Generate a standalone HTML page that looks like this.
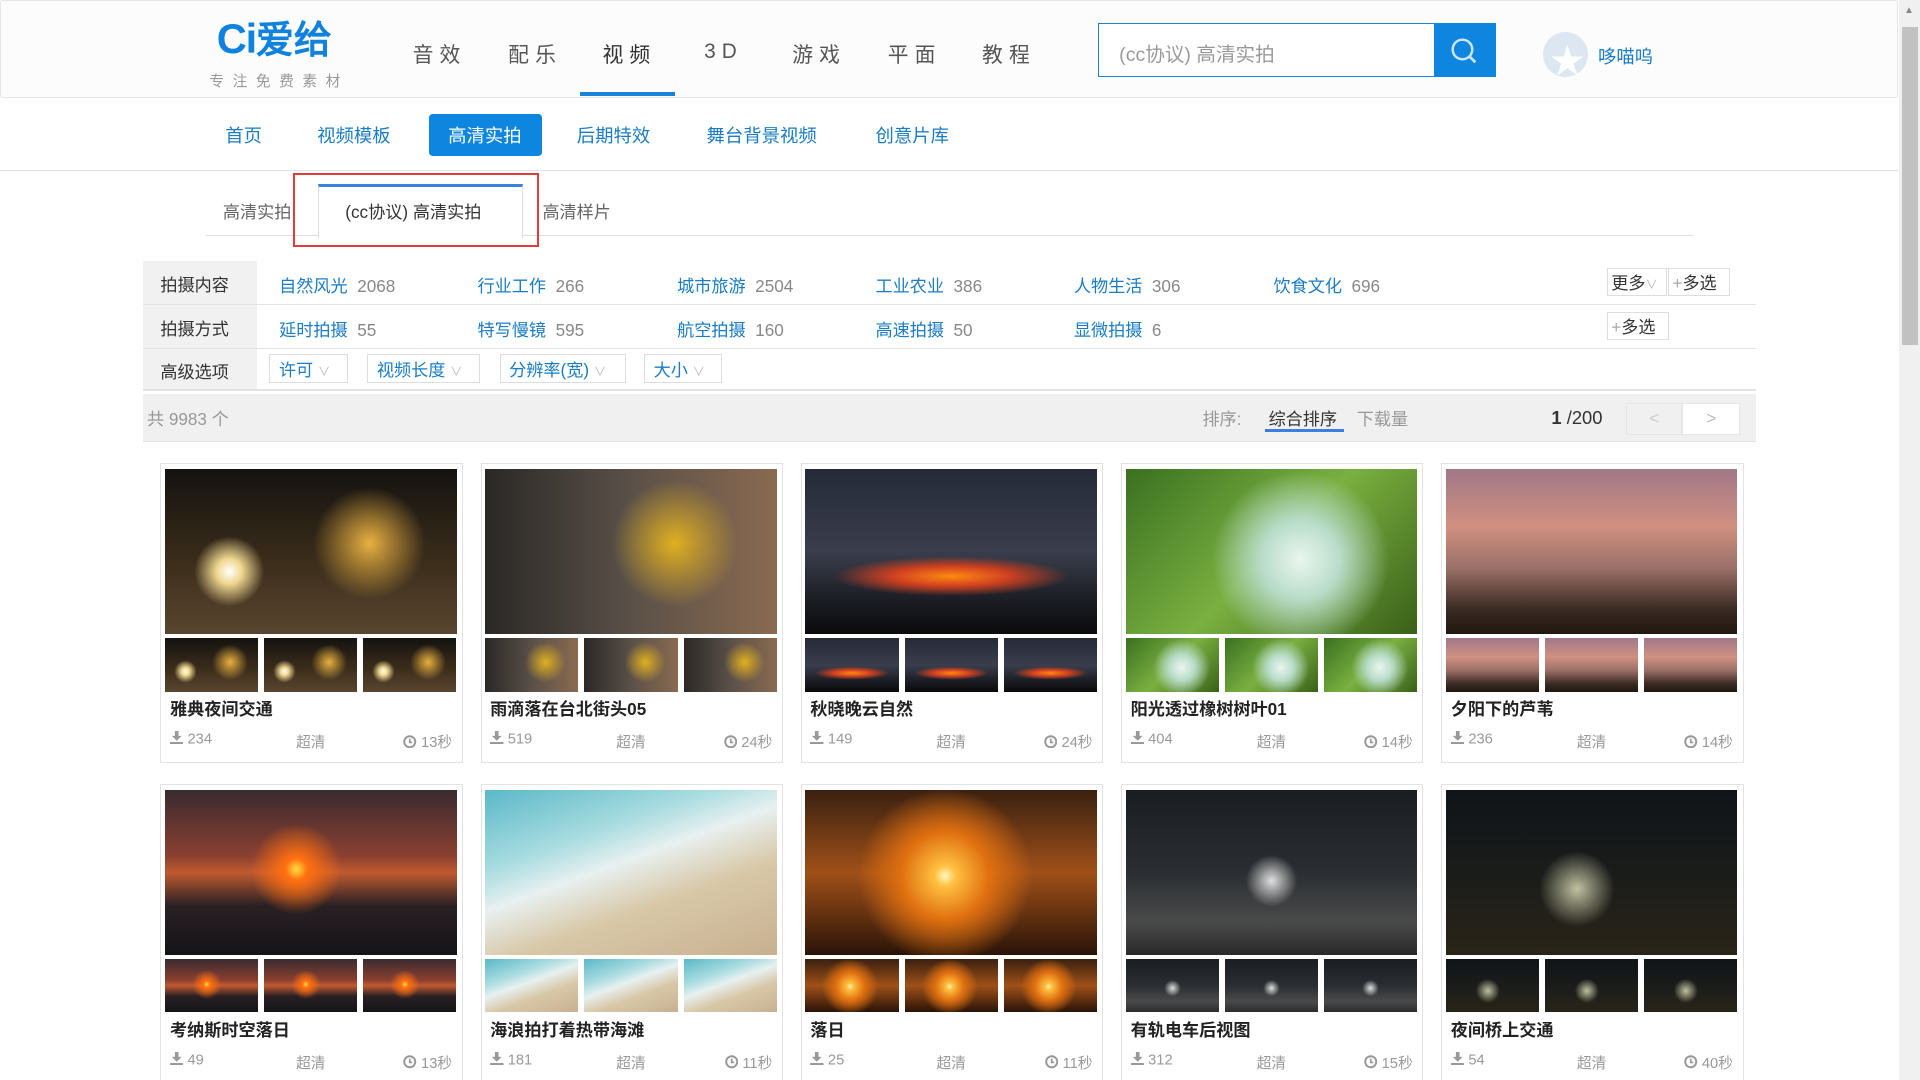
<!DOCTYPE html>
<html><head><meta charset="utf-8"><style>
*{margin:0;padding:0;box-sizing:border-box}
html,body{width:1920px;height:1080px;overflow:hidden;background:#fff}
#r{zoom:1.22449;width:1568px;height:882px;position:relative;font-family:"Liberation Sans","Noto Sans CJK SC",sans-serif;color:#333;overflow:hidden}
.a{position:absolute;white-space:nowrap}
.blue{color:#1a7cc8}
.g{color:#888}
.card{position:absolute;width:247px;height:245px;border:1px solid #e3e3e3;background:#fff}
.main{position:absolute;left:3px;top:4px;width:238px;height:135px}
.th{position:absolute;top:142px;width:76px;height:44px}
.tt{position:absolute;left:7px;top:189px;font-size:14px;font-weight:bold;color:#222}
.mt{position:absolute;top:218px;font-size:12px;color:#999}
.mt svg{vertical-align:-1px}
</style></head><body><div id="r">
<div class="a" style="left:0;top:0;width:1550px;height:80px;background:#fcfcfc;border:1px solid #e6e6e6;border-radius:2px"></div>
<div class="a" style="left:177px;top:12px;font-size:34px;font-weight:bold;color:#0f82de;letter-spacing:-1px;line-height:40px">Ci<span style="font-size:31px;letter-spacing:0;font-weight:normal;-webkit-text-stroke:1px #0f82de">爱给</span></div>
<div class="a" style="left:171px;top:57px;font-size:12px;color:#999;letter-spacing:7px">专注免费素材</div>
<div class="a" style="left:337px;top:31px;font-size:17px;color:#555;letter-spacing:5px">音效</div>
<div class="a" style="left:415px;top:31px;font-size:17px;color:#555;letter-spacing:5px">配乐</div>
<div class="a" style="left:492px;top:31px;font-size:17px;color:#333;letter-spacing:5px">视频</div>
<div class="a" style="left:474px;top:75px;width:77px;height:3px;background:#1c84d6"></div>
<div class="a" style="left:575px;top:33px;font-size:17px;color:#555;letter-spacing:5px">3D</div>
<div class="a" style="left:647px;top:31px;font-size:17px;color:#555;letter-spacing:5px">游戏</div>
<div class="a" style="left:725px;top:31px;font-size:17px;color:#555;letter-spacing:5px">平面</div>
<div class="a" style="left:802px;top:31px;font-size:17px;color:#555;letter-spacing:5px">教程</div>
<div class="a" style="left:897px;top:19px;width:275px;height:44px;border:1px solid #1c84d6;background:#fff"></div>
<div class="a" style="left:914px;top:31px;font-size:16px;color:#999">(cc协议) 高清实拍</div>
<div class="a" style="left:1171px;top:19px;width:51px;height:44px;background:#0e86e0"></div>
<svg class="a" style="left:1183px;top:29px" width="26" height="26" viewBox="0 0 26 26"><circle cx="11" cy="11" r="8" fill="none" stroke="#cfe6fa" stroke-width="2"/><path d="M16.5 16.5l5 5" stroke="#cfe6fa" stroke-width="2.2"/></svg>
<div class="a" style="left:1260px;top:26px;width:37px;height:37px;border-radius:50%;background:#dce7f2"></div>
<div class="a" style="left:1266px;top:27px;font-size:28px;color:#fff">★</div>
<div class="a" style="left:1305px;top:35px;font-size:15px;color:#1a7cc8">哆喵呜</div>
<div class="a" style="left:184px;top:100px;font-size:15px;color:#1a7cc8">首页</div>
<div class="a" style="left:259px;top:100px;font-size:15px;color:#1a7cc8">视频模板</div>
<div class="a" style="left:350px;top:93px;width:93px;height:34px;background:#0e86e0;border-radius:3px"></div>
<div class="a" style="left:366px;top:100px;font-size:15px;color:#fff">高清实拍</div>
<div class="a" style="left:471px;top:100px;font-size:15px;color:#1a7cc8">后期特效</div>
<div class="a" style="left:577px;top:100px;font-size:15px;color:#1a7cc8">舞台背景视频</div>
<div class="a" style="left:715px;top:100px;font-size:15px;color:#1a7cc8">创意片库</div>
<div class="a" style="left:0;top:139px;width:1550px;height:1px;background:#e3e3e3"></div>
<div class="a" style="left:168px;top:192px;width:1215px;height:1px;background:#ddd"></div>
<div class="a" style="left:182px;top:162px;font-size:14px;color:#666">高清实拍</div>
<div class="a" style="left:260px;top:150px;width:167px;height:44px;background:#fff;border-left:1px solid #ddd;border-right:1px solid #ddd;border-top:3px solid #3a80e0"></div>
<div class="a" style="left:282px;top:162px;font-size:14px;color:#333">(cc协议) 高清实拍</div>
<div class="a" style="left:443px;top:162px;font-size:14px;color:#666">高清样片</div>
<div class="a" style="left:239px;top:141px;width:201px;height:61px;border:2px solid #e03c3c"></div>
<div class="a" style="left:117px;top:213px;width:93px;height:105px;background:#f1f1f1"></div>
<div class="a" style="left:117px;top:248px;width:1317px;height:1px;background:#e3e3e3"></div>
<div class="a" style="left:117px;top:284px;width:1317px;height:1px;background:#e3e3e3"></div>
<div class="a" style="left:117px;top:318px;width:1317px;height:1px;background:#e3e3e3"></div>
<div class="a" style="left:131px;top:221px;font-size:14px">拍摄内容</div>
<div class="a" style="left:131px;top:257px;font-size:14px">拍摄方式</div>
<div class="a" style="left:131px;top:292px;font-size:14px">高级选项</div>
<div class="a" style="left:228px;top:222px;font-size:14px"><span class="blue">自然风光</span> <span class="g">&nbsp;2068</span></div>
<div class="a" style="left:390px;top:222px;font-size:14px"><span class="blue">行业工作</span> <span class="g">&nbsp;266</span></div>
<div class="a" style="left:553px;top:222px;font-size:14px"><span class="blue">城市旅游</span> <span class="g">&nbsp;2504</span></div>
<div class="a" style="left:715px;top:222px;font-size:14px"><span class="blue">工业农业</span> <span class="g">&nbsp;386</span></div>
<div class="a" style="left:877px;top:222px;font-size:14px"><span class="blue">人物生活</span> <span class="g">&nbsp;306</span></div>
<div class="a" style="left:1040px;top:222px;font-size:14px"><span class="blue">饮食文化</span> <span class="g">&nbsp;696</span></div>
<div class="a" style="left:228px;top:258px;font-size:14px"><span class="blue">延时拍摄</span> <span class="g">&nbsp;55</span></div>
<div class="a" style="left:390px;top:258px;font-size:14px"><span class="blue">特写慢镜</span> <span class="g">&nbsp;595</span></div>
<div class="a" style="left:553px;top:258px;font-size:14px"><span class="blue">航空拍摄</span> <span class="g">&nbsp;160</span></div>
<div class="a" style="left:715px;top:258px;font-size:14px"><span class="blue">高速拍摄</span> <span class="g">&nbsp;50</span></div>
<div class="a" style="left:877px;top:258px;font-size:14px"><span class="blue">显微拍摄</span> <span class="g">&nbsp;6</span></div>
<div class="a" style="left:1312px;top:219px;width:49px;height:23px;border:1px solid #ddd;font-size:14px;padding:0 3px">更多<span style="color:#bbb;font-size:10px">∨</span></div>
<div class="a" style="left:1362px;top:219px;width:51px;height:23px;border:1px solid #ddd;font-size:14px;padding:0 3px"><span style="color:#aaa">+</span>多选</div>
<div class="a" style="left:1312px;top:255px;width:51px;height:23px;border:1px solid #ddd;font-size:14px;padding:0 3px"><span style="color:#aaa">+</span>多选</div>
<div class="a" style="left:220px;top:289px;width:64px;height:24px;border:1px solid #ddd;font-size:14px;padding:1px 7px" ><span class="blue">许可</span> <span style="color:#bbb;font-size:10px">∨</span></div>
<div class="a" style="left:300px;top:289px;width:92px;height:24px;border:1px solid #ddd;font-size:14px;padding:1px 7px"><span class="blue">视频长度</span> <span style="color:#bbb;font-size:10px">∨</span></div>
<div class="a" style="left:408px;top:289px;width:103px;height:24px;border:1px solid #ddd;font-size:14px;padding:1px 7px"><span class="blue">分辨率(宽)</span> <span style="color:#bbb;font-size:10px">∨</span></div>
<div class="a" style="left:526px;top:289px;width:64px;height:24px;border:1px solid #ddd;font-size:14px;padding:1px 7px"><span class="blue">大小</span> <span style="color:#bbb;font-size:10px">∨</span></div>
<div class="a" style="left:117px;top:322px;width:1317px;height:39px;background:#f0f0f0;border-bottom:1px solid #e3e3e3"></div>
<div class="a" style="left:120px;top:331px;font-size:14px;color:#999">共 9983 个</div>
<div class="a" style="left:982px;top:331px;font-size:14px;color:#999">排序:</div>
<div class="a" style="left:1036px;top:331px;font-size:14px;color:#333">综合排序</div>
<div class="a" style="left:1033px;top:350px;width:65px;height:3px;background:#3a80e0"></div>
<div class="a" style="left:1108px;top:331px;font-size:14px;color:#999">下载量</div>
<div class="a" style="left:1267px;top:332px;font-size:15px;color:#333"><b>1</b> /200</div>
<div class="a" style="left:1328px;top:329px;width:46px;height:26px;background:#f0f0f0;border:1px solid #e6e6e6;color:#ccc;text-align:center;font-size:14px;line-height:24px">&lt;</div>
<div class="a" style="left:1374px;top:329px;width:47px;height:26px;background:#fff;border:1px solid #e6e6e6;color:#bbb;text-align:center;font-size:14px;line-height:24px">&gt;</div>
<div id="cards"></div>
<div class="a" style="left:1551px;top:0;width:17px;height:882px;background:#f0f0f0"></div>
<div class="a" style="left:1553px;top:22px;width:13px;height:260px;background:#c1c1c1"></div>
<div class="a" style="left:1555px;top:4px;font-size:8px;color:#888">▲</div>
</div>
<script>
var D=[
["雅典夜间交通","234","13秒","radial-gradient(circle at 22% 62%,#fff 0,#f0d890 5%,transparent 14%),radial-gradient(circle at 70% 45%,#e8b040 0,transparent 25%),linear-gradient(#141210,#3a2c1a 55%,#5a4630)"],
["雨滴落在台北街头05","519","24秒","radial-gradient(circle at 65% 45%,#e0b020 0,transparent 30%),linear-gradient(90deg,#2a2826,#5a5048 50%,#8a6a50)"],
["秋晓晚云自然","149","24秒","radial-gradient(ellipse 40% 12% at 50% 65%,#ff8a10 0,#d04020 50%,transparent 100%),linear-gradient(#252a38,#3a3e4c 50%,#20222a 75%,#0a0a0c)"],
["阳光透过橡树树叶01","404","14秒","radial-gradient(circle at 60% 55%,#eaf6f0 0,#b8dcc8 20%,transparent 45%),linear-gradient(135deg,#3a7020,#7ab040 50%,#3a6018)"],
["夕阳下的芦苇","236","14秒","linear-gradient(#a07888,#d09080 35%,#9a7068 60%,#3a2a22 85%,#201810)"],
["考纳斯时空落日","49","13秒","radial-gradient(circle at 45% 48%,#ffe040 0,#ff7010 6%,transparent 25%),linear-gradient(#3a2a30,#8a4030 40%,#c05a30 50%,#2a2024 70%,#141418)"],
["海浪拍打着热带海滩","181","11秒","linear-gradient(160deg,#5ab8c8,#a8dce0 30%,#e8f0f0 45%,#d8c8a8 65%,#c8b090)"],
["落日","25","11秒","radial-gradient(circle at 48% 52%,#fff8c0 0,#ffc040 6%,#e07010 25%,transparent 50%),linear-gradient(#3a2010,#a05018 50%,#2a1408)"],
["有轨电车后视图","312","15秒","radial-gradient(circle at 50% 55%,#e0e0e0 0,transparent 15%),linear-gradient(#1a1e22,#2a2e32 50%,#4a4a4a 80%,#2a2a2a)"],
["夜间桥上交通","54","40秒","radial-gradient(circle at 45% 60%,#c0c0a0 0,transparent 20%),linear-gradient(#101418,#1a1c1a 50%,#2a2418)"]];
var dl='<svg width="11" height="11" viewBox="0 0 11 11"><path d="M4 0h3v4h2.5L5.5 8 1.5 4H4z" fill="#999"/><rect x="0" y="9" width="11" height="2" fill="#999"/></svg>';
var ck='<svg width="11" height="11" viewBox="0 0 11 11"><circle cx="5.5" cy="5.5" r="4.5" fill="none" stroke="#999" stroke-width="1.6"/><path d="M5.5 3v3h2" fill="none" stroke="#999" stroke-width="1.4"/></svg>';
var h="";
D.forEach(function(d,i){var c=i%5,r=Math.floor(i/5);var x=131+c*261.5,y=378+r*262;
h+='<div class="card" style="left:'+x+'px;top:'+y+'px"><div class="main" style="background:'+d[3]+'"></div>';
for(var k=0;k<3;k++)h+='<div class="th" style="left:'+(3+k*81)+'px;background:'+d[3]+'"></div>';
h+='<div class="tt">'+d[0]+'</div><div class="mt" style="left:7px">'+dl+' '+d[1]+'</div><div class="mt" style="left:110px">超清</div><div class="mt" style="right:8px">'+ck+' '+d[2]+'</div></div>';});
document.getElementById("cards").innerHTML=h;
</script>
</body></html>
